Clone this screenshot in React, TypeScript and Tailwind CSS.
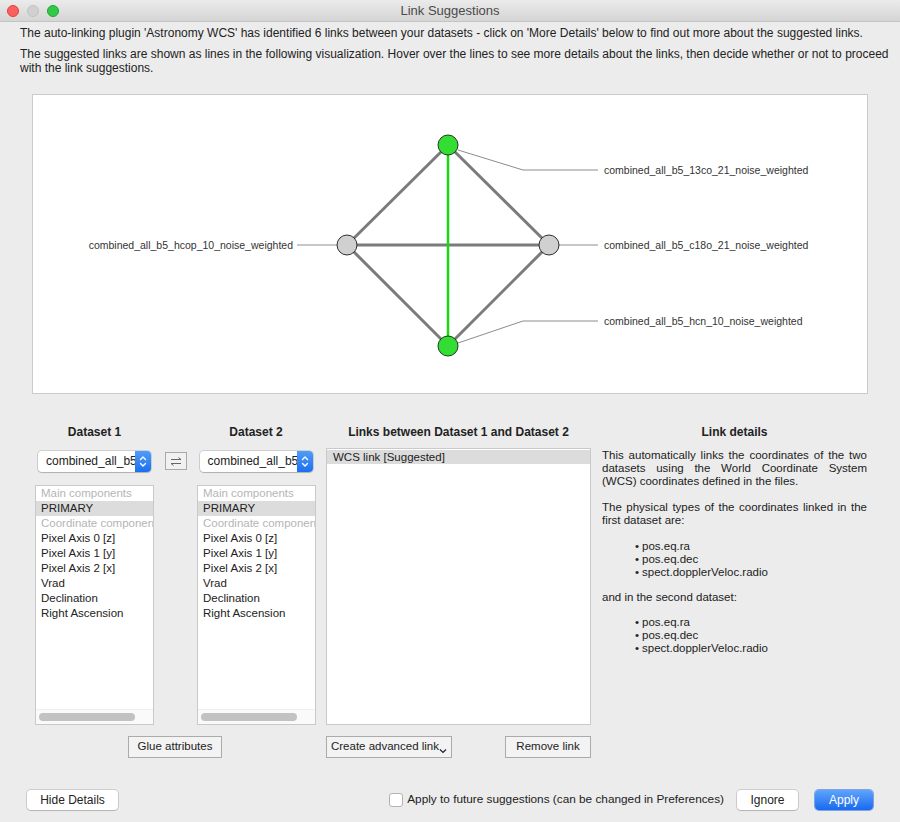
import React from 'react'

const listItems = [
  { label: 'Main components', kind: 'group' },
  { label: 'PRIMARY', kind: 'selected' },
  { label: 'Coordinate components', kind: 'group' },
  { label: 'Pixel Axis 0 [z]', kind: 'item' },
  { label: 'Pixel Axis 1 [y]', kind: 'item' },
  { label: 'Pixel Axis 2 [x]', kind: 'item' },
  { label: 'Vrad', kind: 'item' },
  { label: 'Declination', kind: 'item' },
  { label: 'Right Ascension', kind: 'item' },
]

function Graph() {
  const edge = '#7b7b7b'
  return (
    <svg width="834" height="298" viewBox="0 0 834 298">
      {/* leader lines */}
      <line x1="264" y1="150" x2="304" y2="150" stroke="#b4b4b4" strokeWidth="1.5" />
      <polyline points="425,55 490,75 565,75" fill="none" stroke="#8c8c8c" strokeWidth="1" />
      <line x1="526" y1="150" x2="565" y2="150" stroke="#b4b4b4" strokeWidth="1.5" />
      <polyline points="425,248 490,226 565,226" fill="none" stroke="#8c8c8c" strokeWidth="1" />

      {/* edges */}
      <line x1="314" y1="150" x2="415" y2="50" stroke={edge} strokeWidth="3" />
      <line x1="314" y1="150" x2="415" y2="251" stroke={edge} strokeWidth="3" />
      <line x1="516" y1="150" x2="415" y2="50" stroke={edge} strokeWidth="3" />
      <line x1="516" y1="150" x2="415" y2="251" stroke={edge} strokeWidth="3" />
      <line x1="314" y1="150" x2="516" y2="150" stroke={edge} strokeWidth="3" />
      <line x1="415" y1="50" x2="415" y2="251" stroke="#16d816" strokeWidth="2.5" />

      {/* nodes */}
      <circle cx="415" cy="50" r="10" fill="#33dd33" stroke="#1b3d1b" strokeWidth="1" />
      <circle cx="415" cy="251" r="10" fill="#33dd33" stroke="#1b3d1b" strokeWidth="1" />
      <circle cx="314" cy="150" r="10" fill="#d0d0d0" stroke="#2f2f2f" strokeWidth="1" />
      <circle cx="516" cy="150" r="10" fill="#d0d0d0" stroke="#2f2f2f" strokeWidth="1" />

      <g fontSize="10.5" fill="#333" fontFamily="'Liberation Sans', Arial, sans-serif">
        <text x="260" y="151" textAnchor="end" dominantBaseline="middle">
          combined_all_b5_hcop_10_noise_weighted
        </text>
        <text x="571" y="76" dominantBaseline="middle">combined_all_b5_13co_21_noise_weighted</text>
        <text x="571" y="151" dominantBaseline="middle">combined_all_b5_c18o_21_noise_weighted</text>
        <text x="571" y="227" dominantBaseline="middle">combined_all_b5_hcn_10_noise_weighted</text>
      </g>
    </svg>
  )
}

function Combo() {
  return (
    <div className="mx-auto mt-[10px] flex h-[21px] w-[113px] overflow-hidden rounded-[4px] bg-white shadow-[0_0_0_1px_rgba(0,0,0,0.12),0_1px_1px_rgba(0,0,0,0.15)]">
      <div className="flex-1 overflow-hidden whitespace-nowrap pl-[8px] text-[12px] leading-[21px] text-[#222]">
        combined_all_b5_hcop_10_noise_weighted
      </div>
      <div className="flex w-[16px] items-center justify-center bg-gradient-to-b from-[#4f9cf8] to-[#1a6ff0]">
        <svg width="8" height="13" viewBox="0 0 8 13" fill="none" stroke="white" strokeWidth="1.4" strokeLinecap="round" strokeLinejoin="round">
          <path d="M1.5 4.5 4 2l2.5 2.5" />
          <path d="M1.5 8.5 4 11l2.5-2.5" />
        </svg>
      </div>
    </div>
  )
}

function ComponentList() {
  return (
    <div className="mt-[13px] flex h-[240px] w-[119px] flex-col border border-[#c9c9c9] bg-white">
      <div className="flex-1 overflow-hidden whitespace-nowrap text-[11.5px] leading-[15px]">
        {listItems.map((it) => (
          <div
            key={it.label}
            className={
              it.kind === 'group'
                ? 'px-[5px] text-[#b5b5b5]'
                : it.kind === 'selected'
                  ? 'bg-[#dcdcdc] px-[5px] text-[#222]'
                  : 'px-[5px] text-[#222]'
            }
          >
            {it.label}
          </div>
        ))}
      </div>
      <div className="flex h-[15px] items-center border-t border-[#efefef] bg-[#fafafa] px-[3px]">
        <div className="h-[8px] w-[96px] rounded-full bg-[#c2c2c2]" />
      </div>
    </div>
  )
}

function QtButton({ children, className = '' }: { children: React.ReactNode; className?: string }) {
  return (
    <button className={`flex h-[22px] items-center justify-center border border-[#ababab] bg-[#f3f3f3] text-[11.5px] text-[#222] ${className}`}>
      {children}
    </button>
  )
}

function MacButton({ children, className = '' }: { children: React.ReactNode; className?: string }) {
  return (
    <button className={`flex h-[20px] items-center justify-center rounded-[4px] bg-white text-[12px] text-[#222] shadow-[0_0_0_1px_rgba(0,0,0,0.13),0_1px_1px_rgba(0,0,0,0.12)] ${className}`}>
      {children}
    </button>
  )
}

function JLine({ children }: { children: React.ReactNode }) {
  return <div className="whitespace-nowrap text-justify [text-align-last:justify]">{children}</div>
}

function Bullets() {
  return (
    <div className="pl-[33px]">
      {['pos.eq.ra', 'pos.eq.dec', 'spect.dopplerVeloc.radio'].map((b) => (
        <div key={b} className="flex">
          <span className="w-[7px]">•</span>
          <span>{b}</span>
        </div>
      ))}
    </div>
  )
}

export default function App() {
  return (
    <div className="flex h-[822px] w-[900px] flex-col overflow-hidden bg-[#ececec] font-['Liberation_Sans',Arial,sans-serif] text-[#222]">
      {/* Title bar */}
      <div className="flex h-[22px] items-center border-b border-[#c4c4c4] bg-gradient-to-b from-[#ebebeb] to-[#d5d5d5] px-[7px]">
        <div className="flex w-[100px] gap-[8px]">
          <span className="h-[12px] w-[12px] rounded-full border border-[#e0443e] bg-[#fc605c]" />
          <span className="h-[12px] w-[12px] rounded-full border border-[#c2c2c2] bg-[#d0d0d0]" />
          <span className="h-[12px] w-[12px] rounded-full border border-[#1fa831] bg-[#34c84a]" />
        </div>
        <div className="flex-1 text-center text-[13px] text-[#4a4a4a]">Link Suggestions</div>
        <div className="w-[100px]" />
      </div>

      {/* Intro */}
      <div className="whitespace-nowrap px-[20px] pt-[4px] text-[12px] leading-[14px]">
        <p>
          The auto-linking plugin 'Astronomy WCS' has identified 6 links between your datasets - click on 'More
          Details' below to find out more about the suggested links.
        </p>
        <p className="mt-[7px]">
          The suggested links are shown as lines in the following visualization. Hover over the lines to see more
          details about the links, then decide whether or not to proceed
          <br />
          with the link suggestions.
        </p>
      </div>

      {/* Visualization */}
      <div className="ml-[32px] mt-[19px] h-[300px] w-[836px] border border-[#cbcbcb] bg-white">
        <Graph />
      </div>

      {/* Details section */}
      <div className="ml-[35px] mt-[30px] flex items-start">
        {/* Datasets */}
        <div className="flex w-[280px] flex-col">
          <div className="flex items-start">
            <div className="flex w-[119px] flex-col">
              <div className="text-center text-[12px] font-bold leading-[17px]">Dataset 1</div>
              <Combo />
              <ComponentList />
            </div>
            <div className="flex w-[43px] justify-center pt-[28px]">
              <button className="flex h-[18px] w-[22px] items-center justify-center border border-[#a9a9a9] bg-[#f1f1f1]">
                <svg width="12" height="9" viewBox="0 0 12 9" fill="none" stroke="#666" strokeWidth="1">
                  <path d="M1 2.5h10M8.5 0.5l2.5 2" />
                  <path d="M11 6.5H1M3.5 8.5 1 6.5" />
                </svg>
              </button>
            </div>
            <div className="flex w-[118px] flex-col">
              <div className="text-center text-[12px] font-bold leading-[17px]">Dataset 2</div>
              <Combo />
              <ComponentList />
            </div>
          </div>
          <div className="mt-[11px] flex justify-center">
            <QtButton className="w-[94px]">Glue attributes</QtButton>
          </div>
        </div>

        {/* Links */}
        <div className="ml-[11px] flex w-[265px] flex-col">
          <div className="text-center text-[12px] font-bold leading-[17px]">Links between Dataset 1 and Dataset 2</div>
          <div className="mt-[7px] h-[277px] border border-[#c9c9c9] bg-white pt-[1px]">
            <div className="bg-[#dcdcdc] px-[6px] text-[11.5px] leading-[14px]">WCS link [Suggested]</div>
          </div>
          <div className="mt-[11px] flex justify-between">
            <QtButton className="w-[126px] gap-0">
              <span>Create advanced link</span>
              <svg width="8" height="6" viewBox="0 0 8 6" className="mt-[8px]" fill="none" stroke="#222" strokeWidth="1.2">
                <path d="M1 1.5 4 4.5 7 1.5" />
              </svg>
            </QtButton>
            <QtButton className="w-[86px]">Remove link</QtButton>
          </div>
        </div>

        {/* Link details */}
        <div className="ml-[11px] flex w-[265px] flex-col">
          <div className="text-center text-[12px] font-bold leading-[17px]">Link details</div>
          <div className="mt-[8px] text-[11.5px] leading-[13px]">
            <JLine>This automatically links the coordinates of the two</JLine>
            <JLine>datasets using the World Coordinate System</JLine>
            <div>(WCS) coordinates defined in the files.</div>
            <div className="h-[13px]" />
            <JLine>The physical types of the coordinates linked in the</JLine>
            <div>first dataset are:</div>
            <div className="h-[13px]" />
            <Bullets />
            <div className="h-[12px]" />
            <div>and in the second dataset:</div>
            <div className="h-[12px]" />
            <Bullets />
          </div>
        </div>
      </div>

      {/* Bottom bar */}
      <div className="mt-auto mb-[12px] flex items-center px-[27px]">
        <MacButton className="w-[91px]">Hide Details</MacButton>
        <div className="flex-1" />
        <label className="flex items-center gap-[4px] text-[11.8px]">
          <span className="h-[14px] w-[14px] rounded-[3px] border border-[#b3b3b3] bg-white" />
          <span>Apply to future suggestions (can be changed in Preferences)</span>
        </label>
        <MacButton className="ml-[13px] w-[61px]">Ignore</MacButton>
        <button className="ml-[17px] flex h-[20px] w-[58px] items-center justify-center rounded-[4px] bg-gradient-to-b from-[#5ea4fb] to-[#1669ef] text-[12px] text-white shadow-[0_0_0_1px_rgba(20,90,220,0.5)]">
          Apply
        </button>
      </div>
    </div>
  )
}
